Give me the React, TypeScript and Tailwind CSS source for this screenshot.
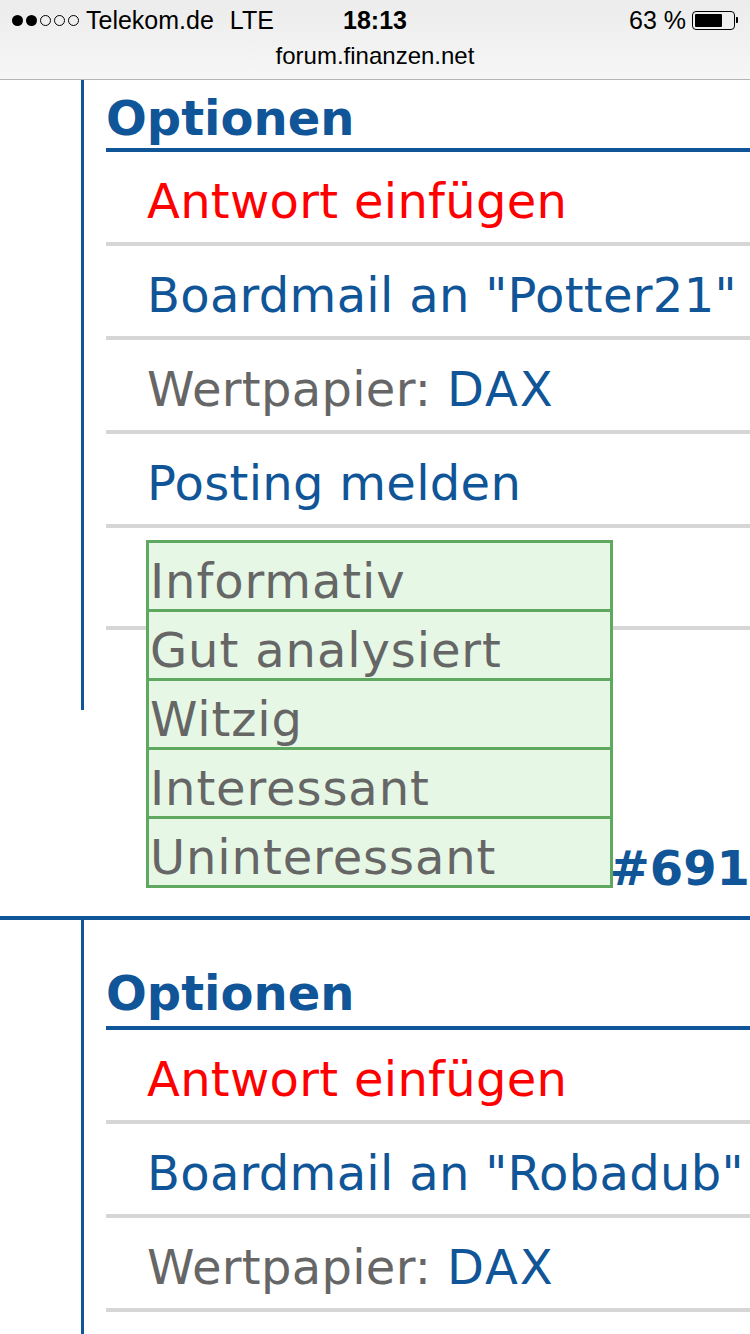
import type { ReactNode } from 'react';

const BLUE = 'text-[#0f5597]';

function StatusBar() {
  return (
    <div className="h-[80px] border-b border-[#b4b4b4] bg-gradient-to-b from-[#ececec] to-[#f6f6f6] font-['Liberation_Sans',Arial,sans-serif] text-black">
      <div className="grid h-[40px] grid-cols-[1fr_auto_1fr] items-center px-[12px]">
        <div className="flex items-center text-[25px] leading-none">
          <div className="flex items-center gap-[3px]">
            <span className="h-[11px] w-[11px] rounded-full bg-black" />
            <span className="h-[11px] w-[11px] rounded-full bg-black" />
            <span className="h-[11px] w-[11px] rounded-full border border-black" />
            <span className="h-[11px] w-[11px] rounded-full border border-black" />
            <span className="h-[11px] w-[11px] rounded-full border border-black" />
          </div>
          <span className="ml-[7px]">Telekom.de</span>
          <span className="ml-[16px]">LTE</span>
        </div>
        <div className="text-[25px] font-bold leading-none">18:13</div>
        <div className="flex items-center justify-end text-[25px] leading-none">
          <span>63 %</span>
          <div className="ml-[6px] flex items-center">
            <div className="flex h-[19px] w-[43px] items-center rounded-[4px] border border-black p-[2px]">
              <div className="h-full w-[27px] rounded-[1px] bg-black" />
            </div>
            <div className="ml-[1px] h-[6px] w-[2px] rounded-r-[1px] bg-black" />
          </div>
        </div>
      </div>
      <div className="pt-[2px] text-center text-[24px] leading-[28px]">forum.finanzen.net</div>
    </div>
  );
}

function Row({ children, tall }: { children?: ReactNode; tall?: boolean }) {
  return (
    <div
      className={`border-b-4 border-[#d6d6d6] pl-[41px] whitespace-nowrap ${
        tall ? 'h-[102px]' : 'h-[94px]'
      }`}
    >
      <div className="pt-[8px] leading-[82px]">{children}</div>
    </div>
  );
}

function OptionsBlock({ user, first }: { user: string; first?: boolean }) {
  return (
    <>
      <div
        className={`border-b-4 border-[#0f5597] text-[48px] font-bold leading-[56px] tracking-normal ${BLUE} ${
          first ? 'pt-[10px] pb-[2px]' : 'pt-[45px] pb-[5px]'
        }`}
      >
        Optionen
      </div>
      <Row>
        <span className="text-[#ff0000]">Antwort einfügen</span>
      </Row>
      <Row>
        <span className={BLUE}>Boardmail an "{user}"</span>
      </Row>
      <Row>
        <span className="text-[#666666]">Wertpapier: </span>
        <span className={`${BLUE} tracking-[2px]`}>DAX</span>
      </Row>
      {first && (
        <Row>
          <span className={BLUE}>Posting melden</span>
        </Row>
      )}
    </>
  );
}

const ratings = ['Informativ', 'Gut analysiert', 'Witzig', 'Interessant', 'Uninteressant'];

function RatingMenu() {
  return (
    <div className="absolute left-[62px] top-[460px] w-[467px] border-[3px] border-[#5fa85f] bg-[#e6f8e5]">
      {ratings.map((label, i) => {
        return (
          <div
            key={label}
            className={`h-[66px] whitespace-nowrap pl-[1px] pt-[10px] text-[48px] leading-[56px] tracking-[0.9px] text-[#666666] ${
              i > 0 ? 'border-t-[3px] border-[#5fa85f] h-[69px]' : ''
            }`}
          >
            {label}
          </div>
        );
      })}
    </div>
  );
}

export default function App() {
  return (
    <div className="h-[1334px] w-[750px] overflow-hidden bg-white">
      <StatusBar />
      <div className="font-['DejaVu_Sans',Verdana,sans-serif] text-[48px] tracking-[0.3px]">
        <div className="relative ml-[81px] border-l-[3px] border-[#0f5597] pb-[80px] pl-[22px]">
          <OptionsBlock user="Potter21" first />
          <Row tall />
          <RatingMenu />
        </div>
        <div className="flex justify-end pt-[130px]">
          <span className={`whitespace-nowrap text-[48px] font-bold leading-[56px] tracking-normal ${BLUE}`}>
            #691
          </span>
        </div>
        <div className="mt-[20px] h-[4px] bg-[#0f5597]" />
        <div className="ml-[81px] h-[500px] border-l-[3px] border-[#0f5597] pl-[22px]">
          <OptionsBlock user="Robadub" />
        </div>
      </div>
    </div>
  );
}
